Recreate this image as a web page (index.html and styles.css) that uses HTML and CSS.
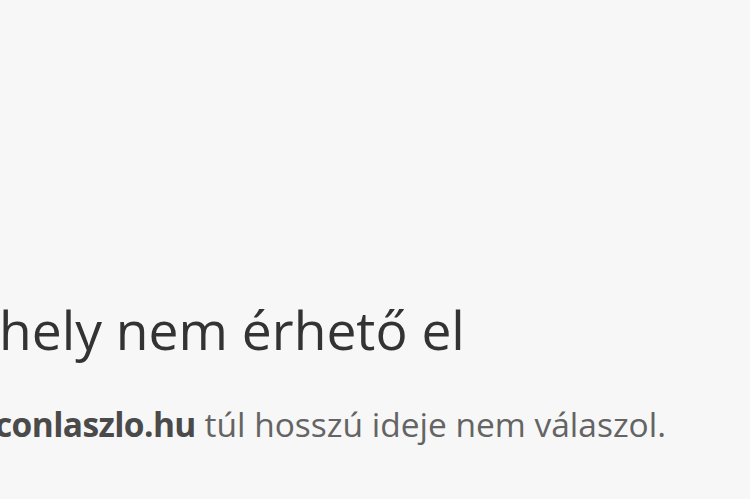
FILE: index.html
```html
<!DOCTYPE html>
<html lang="hu">
<head>
    <meta charset="UTF-8">
    <meta name="viewport" content="width=device-width, initial-scale=1.0">
    <link rel="stylesheet" href="styles.css">
    <title>Ez a webhely nem érhető el</title>
</head>
<body>
    <div class="interstitial">
        <h1 class="heading">hely nem érhető el</h1>
        <p class="summary"><strong>conlaszlo.hu</strong> túl hosszú ideje nem válaszol.</p>
    </div>
</body>
</html>
```

FILE: styles.css
```css
html, body {
    margin: 0;
    height: 100%;
}
body {
    background-color: #f7f7f7;
    font-family: 'Open Sans', 'Noto Sans', sans-serif;
    overflow: hidden;
}
.interstitial {
    padding-top: 290px;
}
.heading {
    margin: 0 0 0 -1px;
    font-size: 53.4px;
    font-weight: 400;
    line-height: 80px;
    color: #333;
}
.summary {
    margin: 34px 0 0 -5px;
    font-size: 33.5px;
    line-height: 40px;
    color: #646464;
}
.summary strong {
    color: #4a4a4a;
    font-weight: 700;
    letter-spacing: -0.6px;
}
```
